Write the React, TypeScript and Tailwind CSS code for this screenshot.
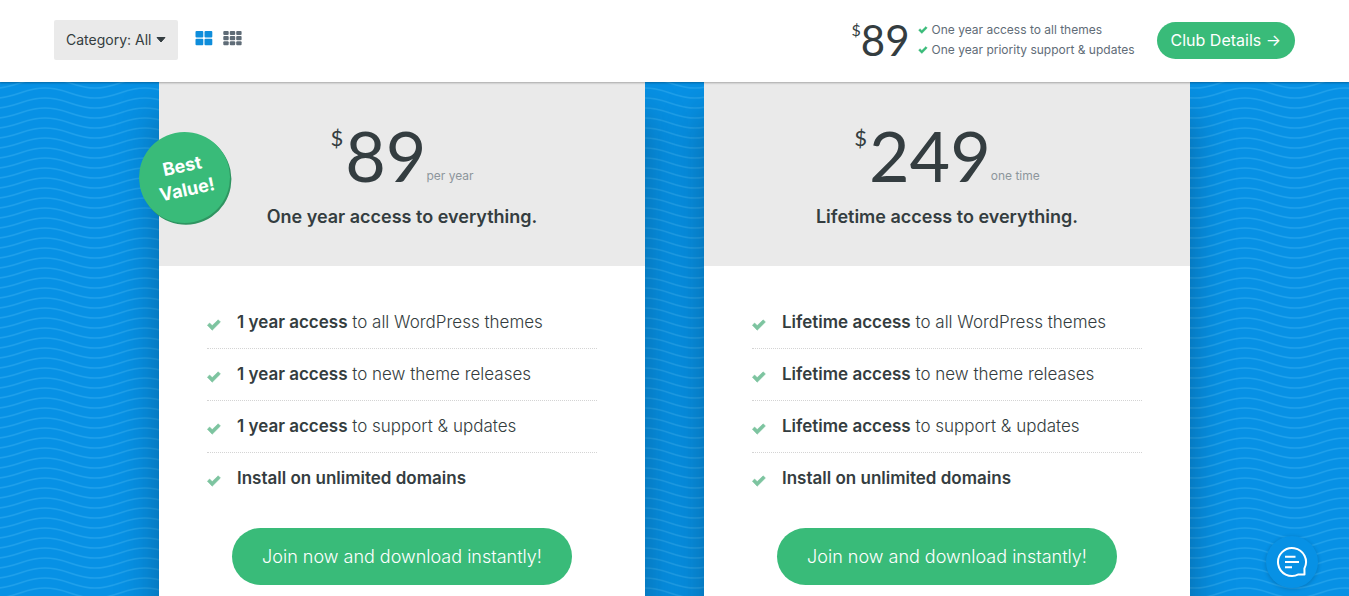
import { useState } from "react";

const sans = "font-['Inter','Liberation_Sans',sans-serif]";
const round = "font-['Lato','Liberation_Sans',sans-serif]";

interface Plan {
  price: string;
  term: string;
  headline: string;
  features: { strong: string; rest?: string }[];
  bestValue?: boolean;
}

const plans: Plan[] = [
  {
    price: "89",
    term: "per year",
    headline: "One year access to everything.",
    bestValue: true,
    features: [
      { strong: "1 year access", rest: "to all WordPress themes" },
      { strong: "1 year access", rest: "to new theme releases" },
      { strong: "1 year access", rest: "to support & updates" },
      { strong: "Install on unlimited domains" },
    ],
  },
  {
    price: "249",
    term: "one time",
    headline: "Lifetime access to everything.",
    features: [
      { strong: "Lifetime access", rest: "to all WordPress themes" },
      { strong: "Lifetime access", rest: "to new theme releases" },
      { strong: "Lifetime access", rest: "to support & updates" },
      { strong: "Install on unlimited domains" },
    ],
  },
];

const perks = ["One year access to all themes", "One year priority support & updates"];

function Check({ className }: { className: string }) {
  return (
    <svg viewBox="0 0 14 12" className={className} fill="currentColor" aria-hidden="true">
      <path d="M0.4 6.2 2.6 4 5.2 6.6 11.2 0.8 13.4 3 5.2 11.2Z" stroke="currentColor" strokeWidth="0.6" strokeLinejoin="round" />
    </svg>
  );
}

function Waves() {
  return (
    <svg className="absolute inset-0 h-full w-full" aria-hidden="true">
      <defs>
        <pattern id="waves" x="-5" y="6" width="100" height="10" patternUnits="userSpaceOnUse">
          {[-20, -10, 0, 10].map((y) => (
            <path
              key={y}
              transform={`translate(0 ${y})`}
              d="M-50 0C-28 0-22 10 0 10S28 0 50 0 78 10 100 10 128 0 150 0"
              fill="none"
              stroke="#1fa0ea"
              strokeWidth="1.7"
            />
          ))}
        </pattern>
      </defs>
      <rect width="100%" height="100%" fill="url(#waves)" />
    </svg>
  );
}

function PlanCard({ plan }: { plan: Plan }) {
  return (
    <article className="relative bg-white shadow-[0_30px_40px_rgba(0,0,0,0.3)]">
      <div className="bg-[#eaeaea] pt-[42px] pb-9 text-center text-[#343d40]">
        <div className={`flex justify-center ${round}`}>
          <span className="pt-0.5 text-[22px] leading-6">$</span>
          <span className="ml-0.5 text-[70px] leading-[62px]">{plan.price}</span>
          <span className={`self-end text-xs leading-5 text-[#8d969c] ${sans}`}>{plan.term}</span>
        </div>
        <h2 className="mt-[17px] text-lg leading-[27px] font-semibold">{plan.headline}</h2>
      </div>
      <div className="px-12 pt-[31px] pb-10">
        <ul>
          {plan.features.map((feature, i) => (
            <li
              key={i}
              className="flex h-[52px] items-center gap-4 border-b border-dotted border-[#d4d4d4] text-[17px] text-[#343d40] last:border-b-0"
            >
              <Check className="mt-1 h-3 w-3.5 text-[#7dc4a0]" />
              <span className="font-light">
                <strong className="font-semibold">{feature.strong}</strong>
                {feature.rest && ` ${feature.rest}`}
              </span>
            </li>
          ))}
        </ul>
        <div className="mt-[23px] text-center">
          <button type="button" className="h-[57px] rounded-full bg-[#39bb79] px-[30px] text-lg font-light text-white">
            Join now and download instantly!
          </button>
        </div>
      </div>
      {plan.bestValue && (
        <div className="absolute top-[50px] -left-5 flex h-[91px] w-[91px] -rotate-12 items-center justify-center rounded-full bg-[#39bb79] shadow-[1px_2px_0_#2f9561]">
          <p className="w-16 text-center text-lg leading-6 font-bold text-white">Best Value!</p>
        </div>
      )}
    </article>
  );
}

export default function App() {
  const [columns, setColumns] = useState(2);

  return (
    <div className={`relative flex h-screen flex-col overflow-hidden bg-[#0791e5] ${sans}`}>
      <header className="relative z-10 flex h-[82px] shrink-0 items-center justify-between bg-white px-[54px] pb-0.5 shadow-[0_1px_2px_rgba(0,0,0,0.3)]">
        <div className="flex items-center">
          <div className="relative">
            <select
              aria-label="Category"
              className="h-10 w-[124px] appearance-none rounded-xs bg-[#eaeaea] pl-3 text-sm text-[#343d40]"
            >
              <option>Category: All</option>
            </select>
            <svg viewBox="0 0 10 6" className="pointer-events-none absolute top-[17px] right-3 h-1.5 w-2.5" aria-hidden="true">
              <path d="M1 0.5h8L5 5z" fill="#343d40" stroke="#343d40" strokeLinejoin="round" />
            </svg>
          </div>
          <button type="button" aria-label="Two columns" className="mb-1 ml-[17px]" onClick={() => setColumns(2)}>
            <svg viewBox="0 0 18 16" className={columns === 2 ? "h-4 w-[18px] text-[#0e8ddb]" : "h-4 w-[18px] text-[#5f6c77]"} fill="currentColor">
              {[0.5, 9.5].map((x) => [1, 8.7].map((y) => <rect key={`${x}-${y}`} x={x} y={y} width="7.8" height="6.6" rx="1" />))}
            </svg>
          </button>
          <button type="button" aria-label="Three columns" className="mb-1 ml-2.5" onClick={() => setColumns(3)}>
            <svg viewBox="0 0 19 16" className={columns === 3 ? "h-4 w-[19px] text-[#0e8ddb]" : "h-4 w-[19px] text-[#5f6c77]"} fill="currentColor">
              {[0.3, 6.8, 13.2].map((x) => [1, 6.1, 11.2].map((y) => <rect key={`${x}-${y}`} x={x} y={y} width="5.4" height="4.1" rx="1" />))}
            </svg>
          </button>
        </div>
        <div className="flex items-center">
          <div className={`flex text-[#343d40] ${round}`}>
            <span className="text-base leading-5">$</span>
            <span className="text-[42px] leading-10">89</span>
          </div>
          <ul className="ml-2 text-xs leading-5 text-[#5f6c77]">
            {perks.map((perk) => (
              <li key={perk} className="flex items-center gap-1">
                <Check className="h-2 w-2.5 text-[#39bb79]" />
                {perk}
              </li>
            ))}
          </ul>
          <a href="#club" className="ml-[22px] flex h-[37px] items-center rounded-full bg-[#39bb79] px-3.5 text-base text-white">
            Club Details →
          </a>
        </div>
      </header>

      <main className="relative flex-1">
        <Waves />
        <div className="relative mx-auto grid max-w-[1031px] grid-cols-2 gap-[59px]">
          {plans.map((plan) => (
            <PlanCard key={plan.price} plan={plan} />
          ))}
        </div>
      </main>

      <button
        type="button"
        aria-label="Open chat"
        className="fixed right-[31px] bottom-2 z-20 flex h-[52px] w-[52px] items-center justify-center rounded-full bg-[#0791e5] shadow-[0_1px_4px_rgba(0,0,0,0.2)]"
      >
        <svg viewBox="0 0 32 32" className="h-8 w-8" fill="none" stroke="#fff" strokeWidth="2" strokeLinejoin="round" aria-hidden="true">
          <path d="M28.5 28.4H22.5A14 14 0 1 1 28.4 22.5ZM9 10.7h10.5M9 16h14M9 21.3h7" />
        </svg>
      </button>
    </div>
  );
}
